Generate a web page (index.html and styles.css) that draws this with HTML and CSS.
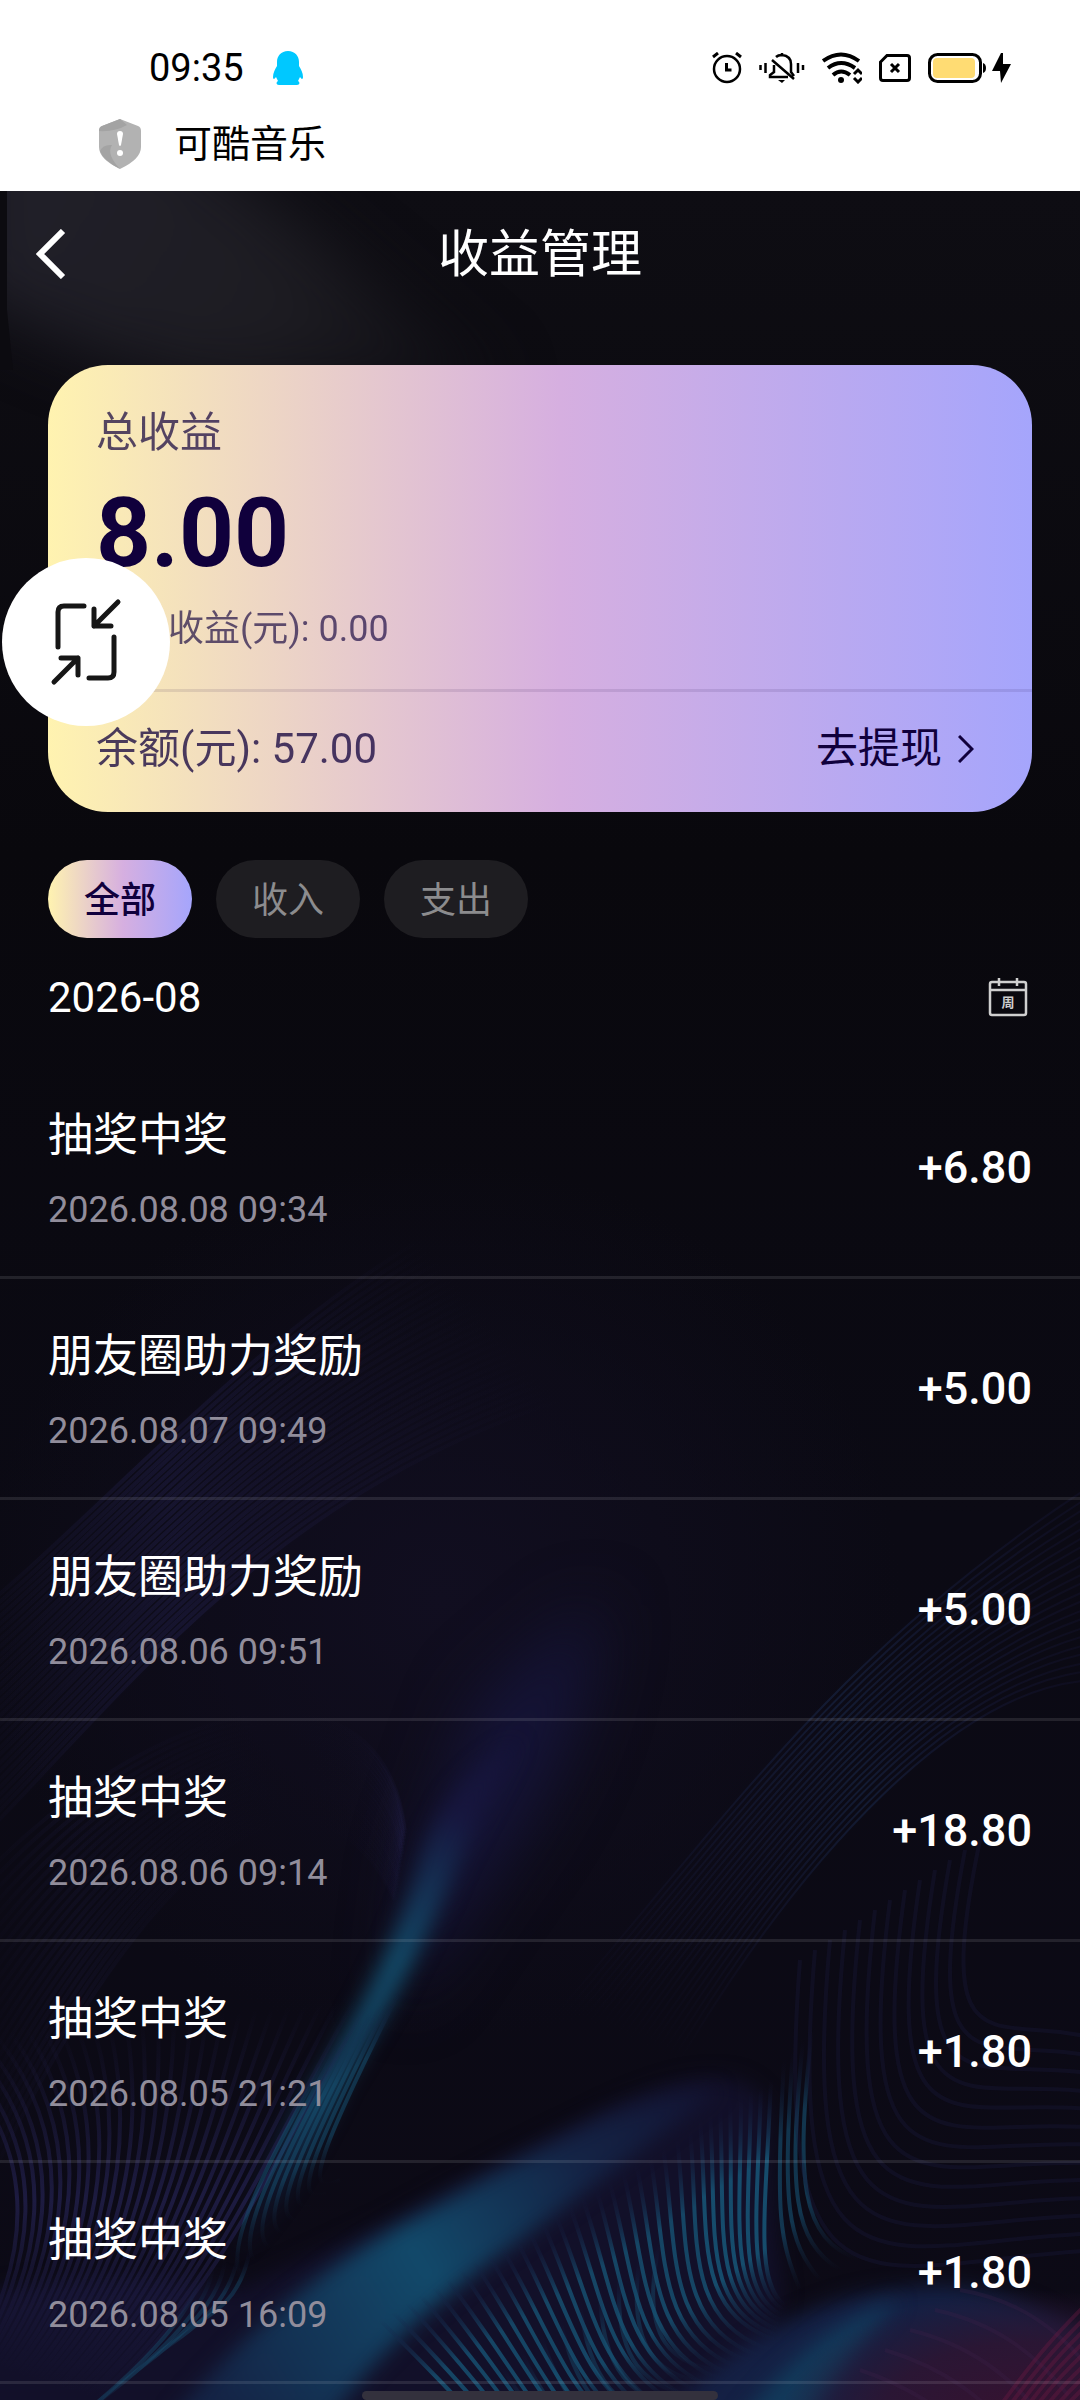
FILE: index.html
```
<!DOCTYPE html>
<html lang="zh-CN">

<head>
    <meta charset="UTF-8">
    <meta name="viewport" content="width=device-width, initial-scale=1.0">
    <title>收益管理</title>
    <link rel="stylesheet" href="styles.css">
</head>

<body>
    <div class="system">
        <div class="status">
            <span class="clock">09:35</span>
            <svg class="qq" width="30" height="34" viewBox="0 0 30 34">
                <path fill="#00c8ff" d="M15 0C8 0 4 5 4 11v4C2 18 0 22 0 26c0 2 1 3 3 0l2 4c-2 1-2 4 1 4h18c3 0 3-3 1-4l2-4c2 3 3 2 3 0 0-4-2-8-4-11v-4C26 5 22 0 15 0z" />
            </svg>
            <div class="status-icons">
                <svg width="30" height="32" viewBox="0 0 30 32" fill="none" stroke="#000" stroke-width="2.5">
                    <circle cx="15" cy="17" r="13" />
                    <path d="M14.5 11v7h5M1 5l5-4M24 1l5 4" stroke-width="3" />
                </svg>
                <svg width="46" height="32" viewBox="0 0 46 32" fill="none" stroke="#000" stroke-width="2.5">
                    <path d="M1.5 13v5M6.5 11v10M39 11v10M44 13v5" />
                    <path d="M17 5q2-2 6-2 9 1 9 9v8l3 4M15 13v7l-4 3v2h18M13 8l22 19M23 1v3" />
                    <path d="M19 28h7l-3 3z" fill="#000" stroke="none" />
                </svg>
                <svg width="40" height="32" viewBox="0 0 40 32" fill="none" stroke="#000" stroke-width="4">
                    <path d="M1 9q18-13 36 0M6 16q13-10 27 0M11 23q8-7 17 0" />
                    <circle cx="19" cy="28" r="3" fill="#000" stroke="none" />
                    <path d="M32 22l4-4 4 4M32 26l4 4 4-4" stroke-width="3" />
                </svg>
                <svg width="32" height="28" viewBox="0 0 32 28" fill="none" stroke="#000" stroke-width="3">
                    <path d="M8 1.5h20q2.5 0 2.5 2.5v20q0 2.5-2.5 2.5H4q-2.5 0-2.5-2.5V8z" />
                    <path d="M12 10l8 8M20 10l-8 8" />
                </svg>
                <div class="battery">
                    <svg width="58" height="30" viewBox="0 0 58 30">
                        <rect x="1.5" y="1.5" width="51" height="27" rx="8" fill="none" stroke="#000" stroke-width="3" />
                        <rect x="5" y="5" width="42" height="20" rx="4" fill="#ffdc73" />
                        <path d="M55 10q3 1 3 5t-3 5z" />
                    </svg>
                    <svg width="19" height="30" viewBox="0 0 19 30">
                        <path d="M9 0L0 18h8l1 12 10-19h-8V0z" />
                    </svg>
                </div>
            </div>
        </div>
        <div class="app-name">
            <svg width="44" height="50" viewBox="0 0 44 50">
                <path fill="#b2b2b2" d="M22 0l18 7q3 1 3 5v16q0 12-21 22Q1 40 1 28V12q0-4 3-5z" />
                <path fill="#a3a3a3" d="M22 0l7 6q-12 7-28 6 0-4 3-5zM2 32q3-7 12-6-6 9 8 24Q5 41 2 32z" />
                <path fill="#fff" d="M22 12q3 0 3 3l-2 11q-1 2-2 0l-2-11q0-3 3-3z" />
                <circle cx="22" cy="34" r="3" fill="#fff" />
            </svg>
            <span>可酷音乐</span>
        </div>
    </div>

    <main class="app">
        <svg class="waves" viewBox="0 191 1080 2209" preserveAspectRatio="xMidYMax slice" aria-hidden="true">
            <defs>
                <linearGradient id="base" x1="0" y1="0" x2="0" y2="1">
                    <stop offset="0" stop-color="#0e0d13" />
                    <stop offset=".3" stop-color="#09080d" />
                    <stop offset=".6" stop-color="#0b0a14" />
                    <stop offset="1" stop-color="#0c0a16" />
                </linearGradient>
                <linearGradient id="sheen" gradientUnits="userSpaceOnUse" x1="60" y1="180" x2="420" y2="400">
                    <stop offset="0" stop-color="#201f28" />
                    <stop offset=".6" stop-color="#1d1c22" />
                    <stop offset="1" stop-color="#121117" />
                </linearGradient>
                <radialGradient id="glow">
                    <stop offset="0" stop-color="#110e20" />
                    <stop offset="1" stop-color="#110e20" stop-opacity="0" />
                </radialGradient>
                <linearGradient id="beam" gradientUnits="userSpaceOnUse" x1="560" y1="1560" x2="240" y2="2270">
                    <stop offset="0" stop-color="#15143a" stop-opacity="0" />
                    <stop offset=".35" stop-color="#17163e" />
                    <stop offset=".55" stop-color="#134a68" />
                    <stop offset=".75" stop-color="#134160" />
                    <stop offset="1" stop-color="#15143a" stop-opacity="0" />
                </linearGradient>
                <linearGradient id="crest" gradientUnits="userSpaceOnUse" x1="220" y1="2400" x2="740" y2="2080">
                    <stop offset="0" stop-color="#142446" />
                    <stop offset=".4" stop-color="#12496a" />
                    <stop offset=".7" stop-color="#142446" />
                    <stop offset="1" stop-color="#131130" />
                </linearGradient>
                <linearGradient id="teal" x1="0" y1="0" x2="0" y2="1">
                    <stop offset="0" stop-color="#15143a" stop-opacity="0" />
                    <stop offset=".35" stop-color="#165273" />
                    <stop offset=".75" stop-color="#165273" />
                    <stop offset="1" stop-color="#16304f" stop-opacity="0" />
                </linearGradient>
                <linearGradient id="indigo" x1="0" y1="0" x2="0" y2="1">
                    <stop offset="0" stop-color="#262457" stop-opacity="0" />
                    <stop offset=".5" stop-color="#262457" />
                    <stop offset="1" stop-color="#262457" stop-opacity="0" />
                </linearGradient>
                <linearGradient id="rise" x1="0" y1="1" x2="1" y2="0">
                    <stop offset="0" stop-color="#1c1b48" stop-opacity="0" />
                    <stop offset=".55" stop-color="#1a2b50" />
                    <stop offset="1" stop-color="#1c1b48" stop-opacity=".4" />
                </linearGradient>
                <radialGradient id="red">
                    <stop offset="0" stop-color="#371230" />
                    <stop offset=".6" stop-color="#2a1634" />
                    <stop offset="1" stop-color="#2a1634" stop-opacity="0" />
                </radialGradient>
                <filter id="soft" x="-50%" y="-50%" width="200%" height="200%" color-interpolation-filters="sRGB">
                    <feGaussianBlur stdDeviation="10" />
                </filter>
                <filter id="haze" x="-50%" y="-50%" width="200%" height="200%" color-interpolation-filters="sRGB">
                    <feGaussianBlur stdDeviation="32" />
                </filter>
            </defs>
            <rect y="191" width="1080" height="2209" fill="url(#base)" />
            <path d="M-40 120H160Q300 220 500 390H240Q100 370-40 290z" fill="url(#sheen)" filter="url(#haze)" />
            <path d="M0 180h7v130l6 60H0z" fill="#0c0b10" />
            <ellipse cx="440" cy="1600" rx="460" ry="440" fill="url(#glow)" />
            <path d="M600 1600Q590 1740 500 1860L400 2010 420 1860 480 1700z" fill="#151438" filter="url(#haze)" />
            <path d="M520 1740Q440 1780 418 1870 390 1960 324 2069 260 2160 235 2260 300 2180 345 2080 420 1960 460 1860z" fill="url(#beam)" filter="url(#soft)" />
            <path d="M-40 2440V2300Q120 2260 240 2290L386 2222Q480 2170 585 2120 740 2040 768 2110 775 2250 782 2289L760 2440z" fill="#121029" filter="url(#soft)" />
            <path d="M170 2420Q280 2290 400 2226 500 2170 600 2120 680 2085 720 2090 640 2150 520 2240 390 2330 330 2420z" fill="url(#crest)" filter="url(#soft)" />
            <path d="M640 2440Q770 2300 895 2290 1000 2270 1100 2350V2440z" fill="#142044" filter="url(#soft)" />
            <path d="M740 2420Q820 2320 900 2300 860 2340 810 2420z" fill="#12395a" filter="url(#soft)" />
            <ellipse cx="1030" cy="2420" rx="250" ry="130" fill="url(#red)" />
            <g id="lines" fill="none"></g>
        </svg>

        <header class="top-bar">
            <button class="back" type="button" aria-label="返回">
                <svg width="30" height="50" viewBox="0 0 30 50" fill="none" stroke="#fff" stroke-width="6">
                    <path d="M27 2L4 25l23 23" />
                </svg>
            </button>
            <h1>收益管理</h1>
        </header>

        <section class="card">
            <div class="card-main">
                <p class="card-label">总收益</p>
                <p class="card-total">8.00</p>
                <p class="card-today">今日收益(元): 0.00</p>
            </div>
            <div class="card-foot">
                <span>余额(元): 57.00</span>
                <a class="withdraw" href="#">去提现
                    <svg width="16" height="28" viewBox="0 0 16 28" fill="none" stroke="#10003c" stroke-width="3">
                        <path d="M1 1l13 13L1 27" />
                    </svg>
                </a>
            </div>
            <button class="float" type="button" aria-label="缩小">
                <svg viewBox="0 0 168 168" fill="none" stroke="#161616" stroke-width="5" stroke-linecap="round" stroke-linejoin="round">
                    <path d="M82 48H62q-6 0-6 6v35M116 44L92 68M92 51v17h17M52 124l24-24M59 100h17v17M112 79v35q0 6-6 6H87" />
                </svg>
            </button>
        </section>

        <nav class="tabs">
            <button class="tab active" type="button">全部</button>
            <button class="tab" type="button">收入</button>
            <button class="tab" type="button">支出</button>
        </nav>

        <div class="month">
            <span>2026-08</span>
            <button class="calendar" type="button" aria-label="选择日期">
                <svg width="40" height="40" viewBox="0 0 40 40" fill="none" stroke="#cfcfcf" stroke-width="2.5">
                    <rect x="2" y="5" width="36" height="33" rx="2" />
                    <path d="M2 13h36M11 1v8M29 1v8" />
                    <text x="20" y="30" text-anchor="middle" fill="#cfcfcf" stroke="none">周</text>
                </svg>
            </button>
        </div>

        <ul class="records">
            <li>
                <div>
                    <h2>抽奖中奖</h2>
                    <time>2026.08.08 09:34</time>
                </div>
                <b>+6.80</b>
            </li>
            <li>
                <div>
                    <h2>朋友圈助力奖励</h2>
                    <time>2026.08.07 09:49</time>
                </div>
                <b>+5.00</b>
            </li>
            <li>
                <div>
                    <h2>朋友圈助力奖励</h2>
                    <time>2026.08.06 09:51</time>
                </div>
                <b>+5.00</b>
            </li>
            <li>
                <div>
                    <h2>抽奖中奖</h2>
                    <time>2026.08.06 09:14</time>
                </div>
                <b>+18.80</b>
            </li>
            <li>
                <div>
                    <h2>抽奖中奖</h2>
                    <time>2026.08.05 21:21</time>
                </div>
                <b>+1.80</b>
            </li>
            <li>
                <div>
                    <h2>抽奖中奖</h2>
                    <time>2026.08.05 16:09</time>
                </div>
                <b>+1.80</b>
            </li>
        </ul>
        <div class="home-bar"></div>
    </main>

    <script src="waves.js"></script>
</body>

</html>
```
FILE: styles.css
```
* {
    box-sizing: border-box;
}

body {
    margin: 0;
    min-height: 100vh;
    display: flex;
    flex-direction: column;
    font-family: Roboto, "Noto Sans CJK SC", sans-serif;
    background-color: #0c0a15;
    color: #fff;
}

h1,
h2,
p,
ul {
    margin: 0;
    padding: 0;
    font-weight: 400;
}

button {
    padding: 0;
    border: none;
    background: none;
    color: inherit;
    font-family: inherit;
    cursor: pointer;
}

svg {
    display: block;
}

/* system bar */
.system {
    height: 191px;
    padding-top: 44px;
    background-color: #fff;
    color: #000;
    font-size: 38px;
}

.status {
    display: flex;
    align-items: center;
    height: 48px;
    padding: 0 69px 0 149px;
}

.qq {
    margin-left: 29px;
}

.status-icons {
    display: flex;
    align-items: center;
    gap: 17px;
    margin-left: auto;
}

.battery {
    display: flex;
    gap: 6px;
}

.app-name {
    display: flex;
    align-items: center;
    gap: 32px;
    height: 56px;
    margin-top: 24px;
    padding-left: 98px;
    line-height: 56px;
}

/* page */
.app {
    position: relative;
    z-index: 0;
    flex: 1;
    display: flex;
    flex-direction: column;
    overflow: hidden;
}

.waves {
    position: absolute;
    z-index: -1;
    top: 0;
    left: 0;
    width: 100%;
    height: 100%;
}

.top-bar {
    display: grid;
    grid-template-columns: 100px 1fr 100px;
    align-items: center;
    height: 126px;
}

.back {
    padding-left: 36px;
}

.top-bar h1 {
    padding-top: 2px;
    font-size: 51px;
    line-height: 72px;
    text-align: center;
}

.card {
    position: relative;
    margin: 48px 48px 0;
    border-radius: 60px;
    background: linear-gradient(90deg, #fff3b0, #d6afe0 52%, #a5a5fc);
    color: #10003c;
}

.card-main {
    padding: 40px 48px 36px;
    border-bottom: 3px solid rgba(16, 0, 60, 0.1);
}

.card-label {
    font-size: 42px;
    line-height: 56px;
    opacity: 0.7;
}

.card-total {
    margin-top: 24px;
    font-size: 96px;
    font-weight: 700;
    line-height: 96px;
}

.card-today {
    margin-top: 24px;
    font-size: 36px;
    line-height: 48px;
    opacity: 0.65;
}

.card-foot {
    display: flex;
    align-items: center;
    justify-content: space-between;
    height: 120px;
    padding: 0 58px 6px 48px;
    font-size: 42px;
    line-height: 56px;
}

.card-foot span {
    opacity: 0.75;
}

.withdraw {
    display: flex;
    align-items: center;
    gap: 16px;
    color: #10003c;
    text-decoration: none;
}

.float {
    position: absolute;
    left: -46px;
    top: 193px;
    width: 168px;
    height: 168px;
    border-radius: 50%;
    background-color: #fff;
}

.tabs {
    display: flex;
    gap: 24px;
    padding: 48px 48px 0;
}

.tab {
    width: 144px;
    height: 78px;
    padding-bottom: 4px;
    border-radius: 39px;
    background-color: #1e1d21;
    color: #8c8c8e;
    font-size: 36px;
}

.tab.active {
    background: linear-gradient(90deg, #fff3b0, #d6afe0 52%, #a5a5fc);
    color: #10003c;
    font-weight: 500;
}

.month {
    display: flex;
    align-items: center;
    justify-content: space-between;
    height: 120px;
    padding: 0 52px 2px 48px;
    font-size: 42px;
}

.calendar text {
    font-size: 13px;
    font-weight: 700;
}

.records {
    list-style: none;
}

.records li {
    display: flex;
    align-items: center;
    justify-content: space-between;
    height: 221px;
    padding: 0 48px;
    border-bottom: 3px solid rgba(255, 255, 255, 0.1);
}

.records div {
    padding-top: 6px;
}

.records h2 {
    font-size: 45px;
    line-height: 60px;
}

.records time {
    display: block;
    margin-top: 20px;
    color: #918d9b;
    font-size: 36px;
    line-height: 48px;
}

.records b {
    font-size: 45px;
    font-weight: 500;
}

.home-bar {
    width: 33%;
    height: 9px;
    margin: auto auto 0;
    border-radius: 5px;
    background-color: #33313d;
}
```
FILE: waves.js
```
// each family runs from the first curve to the second, both "C" curves of 8 numbers
var families = [
    // left, rising to the right
    { from: [-60, 1640, 60, 1560, 220, 1360, 420, 1240], to: [-40, 1860, 120, 1700, 260, 1500, 560, 1400], n: 30, color: 'url(#indigo)', opacity: 0.35 },
    { from: [-20, 1880, 150, 1700, 380, 1640, 405, 1830], to: [-20, 2200, 180, 1780, 330, 1760, 395, 1900], n: 24, color: 'url(#indigo)', opacity: 0.15 },
    // left, falling beside the beam
    { from: [-70, 2040, 60, 2150, 20, 2280, -30, 2360], to: [370, 2000, 260, 2180, 220, 2290, 100, 2400], n: 28, color: 'url(#indigo)', opacity: 0.65 },
    { from: [200, 2270, 200, 2310, 130, 2380, 50, 2440], to: [250, 2250, 240, 2300, 220, 2310, 170, 2340], n: 5, color: 'url(#teal)', opacity: 0.4 },
    { from: [335, 2040, 270, 2160, 225, 2240, 240, 2275], to: [400, 1990, 320, 2150, 300, 2200, 340, 2180], n: 8, color: 'url(#teal)', opacity: 0.5 },
    // right, upper bundle
    { from: [560, 2010, 740, 1800, 850, 1640, 1100, 1480], to: [680, 2060, 800, 1860, 960, 1680, 1100, 1680], n: 22, color: 'url(#rise)', opacity: 0.5, width: 2 },
    // teal stripes below the crest
    { from: [380, 2320, 450, 2390, 490, 2430, 520, 2480], to: [690, 2130, 700, 2230, 680, 2320, 770, 2350], n: 24, color: 'url(#teal)', opacity: 0.8 },
    { from: [700, 2120, 710, 2230, 690, 2310, 775, 2340], to: [771, 2080, 765, 2220, 755, 2280, 784, 2305], n: 8, color: 'url(#teal)', opacity: 0.9 },
    { from: [480, 2380, 520, 2430, 560, 2470, 600, 2490], to: [660, 2240, 640, 2330, 660, 2380, 760, 2370], n: 10, color: 'url(#teal)', opacity: 0.4 },
    // right edge of the crest
    { from: [784, 2060, 775, 2220, 780, 2240, 800, 2290], to: [812, 2030, 795, 2180, 800, 2240, 860, 2260], n: 4, color: 'url(#teal)', opacity: 0.6 },
    { from: [800, 1960, 770, 2350, 880, 2260, 1100, 2250], to: [980, 1840, 930, 2080, 1000, 2010, 1100, 2040], n: 13, color: '#1a1a3c', opacity: 0.35 },
    // bottom right corner
    { from: [960, 2290, 1020, 2300, 1060, 2330, 1090, 2370], to: [860, 2370, 920, 2390, 960, 2420, 1000, 2470], n: 5, color: '#3a2048', opacity: 0.3 },
    { from: [1100, 2290, 1060, 2330, 1040, 2350, 990, 2420], to: [1120, 2370, 1090, 2390, 1060, 2420, 1040, 2450], n: 9, color: '#6a1a40', opacity: 0.4 }
];

var group = document.getElementById('lines');

families.forEach(function (f) {
    for (var i = 0; i < f.n; i++) {
        var t = i / (f.n - 1);
        var p = f.from.map(function (v, k) {
            return Math.round(v + (f.to[k] - v) * t);
        });
        var path = document.createElementNS('http://www.w3.org/2000/svg', 'path');
        path.setAttribute('d', 'M' + p[0] + ' ' + p[1] + 'C' + p.slice(2).join(' '));
        path.setAttribute('stroke', f.color);
        path.setAttribute('stroke-opacity', f.opacity);
        path.setAttribute('stroke-width', f.width || 4);
        group.appendChild(path);
    }
});
```
